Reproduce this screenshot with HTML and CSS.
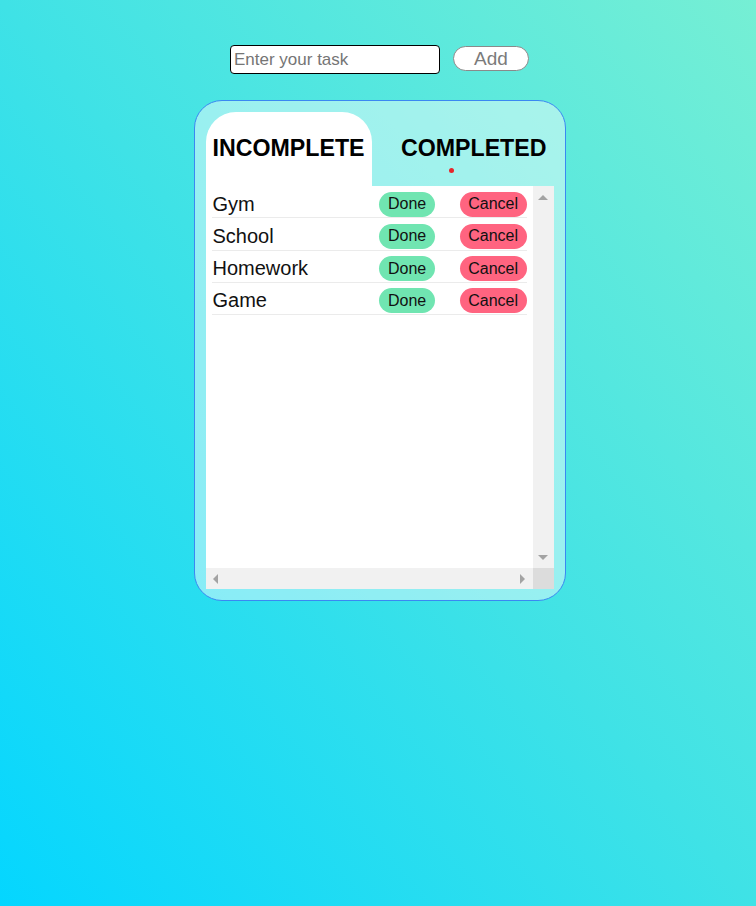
FILE: index.html
```html
<!DOCTYPE html>
<html lang="en">
<head>
<meta charset="utf-8">
<title>Todo</title>
<link rel="stylesheet" href="styles.css">
</head>
<body>
<div class="page">
  <div class="add-row">
    <input class="task-input" type="text" placeholder="Enter your task">
    <button class="add-btn">Add</button>
  </div>
  <div class="card">
    <div class="tabs">
      <div class="tab tab-active">INCOMPLETE</div>
      <div class="tab">COMPLETED</div>
      <span class="dot"></span>
    </div>
    <div class="panel">
      <div class="panel-main">
        <ul class="list">
          <li class="row"><span class="name">Gym</span><button class="btn btn-done">Done</button><button class="btn btn-cancel">Cancel</button></li>
          <li class="row"><span class="name">School</span><button class="btn btn-done">Done</button><button class="btn btn-cancel">Cancel</button></li>
          <li class="row"><span class="name">Homework</span><button class="btn btn-done">Done</button><button class="btn btn-cancel">Cancel</button></li>
          <li class="row"><span class="name">Game</span><button class="btn btn-done">Done</button><button class="btn btn-cancel">Cancel</button></li>
        </ul>
        <div class="vscroll">
          <span class="arrow arrow-up"></span>
          <span class="arrow arrow-down"></span>
        </div>
      </div>
      <div class="hscroll">
        <div class="htrack">
          <span class="arrow arrow-left"></span>
          <span class="arrow arrow-right"></span>
        </div>
        <div class="corner"></div>
      </div>
    </div>
  </div>
</div>
</body>
</html>
```
FILE: styles.css
```css
* { box-sizing: border-box; }
html, body { margin: 0; padding: 0; height: 100%; }
body {
  font-family: "Liberation Sans", Arial, sans-serif;
  background: linear-gradient(to top right, #04d6ff 0%, #3fe2e6 50%, #76efd4 100%);
  min-height: 906px;
}
.page {
  display: flex;
  flex-direction: column;
  align-items: center;
  padding-top: 45px;
  padding-left: 3px;
}
.add-row {
  display: flex;
  align-items: flex-start;
  gap: 13px;
}
.task-input {
  width: 210px;
  height: 29px;
  border: 1px solid #000;
  border-radius: 4px;
  padding: 0 3px;
  font-family: "Liberation Sans", Arial, sans-serif;
  font-size: 17px;
  background: #fff;
  color: #000;
  outline: none;
}
.task-input::placeholder { color: #757575; }
.add-btn {
  margin-top: 1px;
  width: 76px;
  height: 25px;
  border: 1px solid #8a8a8a;
  border-radius: 13px;
  background: #fff;
  color: #7b7b7b;
  font-family: "Liberation Sans", Arial, sans-serif;
  font-size: 19px;
  line-height: 21px;
  padding: 0;
}
.card {
  margin-top: 26px;
  width: 372px;
  height: 501px;
  border: 1px solid #3a88f2;
  border-radius: 28px;
  background: rgba(255, 255, 255, 0.45);
  padding: 11px;
  display: flex;
  flex-direction: column;
}
.tabs {
  position: relative;
  display: flex;
  height: 74px;
}
.tab {
  padding: 23px 7px 0;
  font-size: 23.2px;
  font-weight: bold;
  color: #000;
  white-space: nowrap;
}
.tab + .tab { margin-left: auto; }
.tab-active {
  background: #fff;
  border-radius: 30px 30px 0 0;
}
.dot {
  position: absolute;
  left: 243.5px;
  top: 56px;
  width: 5px;
  height: 5px;
  border-radius: 50%;
  background: #e6262b;
}
.panel {
  display: flex;
  flex-direction: column;
  height: 403px;
  background: #fff;
}
.panel-main {
  display: flex;
  flex: 1;
}
.list {
  list-style: none;
  margin: 0;
  padding: 0 6px;
  flex: 1;
}
.row {
  display: flex;
  align-items: flex-start;
  height: 32.25px;
  padding-top: 5.7px;
  border-bottom: 1px solid #ebebeb;
}
.name {
  flex: 1;
  font-size: 20px;
  line-height: 24px;
  color: #111;
  padding-left: 1px;
}
.btn {
  height: 25px;
  border: none;
  border-radius: 13px;
  padding: 0 8.5px;
  font-family: "Liberation Sans", Arial, sans-serif;
  font-size: 16px;
  color: #111;
}
.btn-done { background: #70e5b1; margin-right: 25px; }
.btn-cancel { background: #ff6480; }
.vscroll {
  width: 21px;
  background: #f1f1f1;
  display: flex;
  flex-direction: column;
  justify-content: space-between;
  align-items: center;
  padding: 9px 0 8px;
}
.hscroll {
  display: flex;
  height: 21px;
}
.htrack {
  flex: 1;
  background: #f1f1f1;
  display: flex;
  justify-content: space-between;
  align-items: center;
  padding: 0 8px 0 7px;
}
.corner {
  width: 21px;
  background: #dcdcdc;
}
.arrow {
  width: 0;
  height: 0;
  border: 5px solid transparent;
}
.arrow-up { border-bottom-color: #a3a3a3; border-top-width: 0; }
.arrow-down { border-top-color: #a3a3a3; border-bottom-width: 0; }
.arrow-left { border-right-color: #a3a3a3; border-left-width: 0; }
.arrow-right { border-left-color: #a3a3a3; border-right-width: 0; }
```
